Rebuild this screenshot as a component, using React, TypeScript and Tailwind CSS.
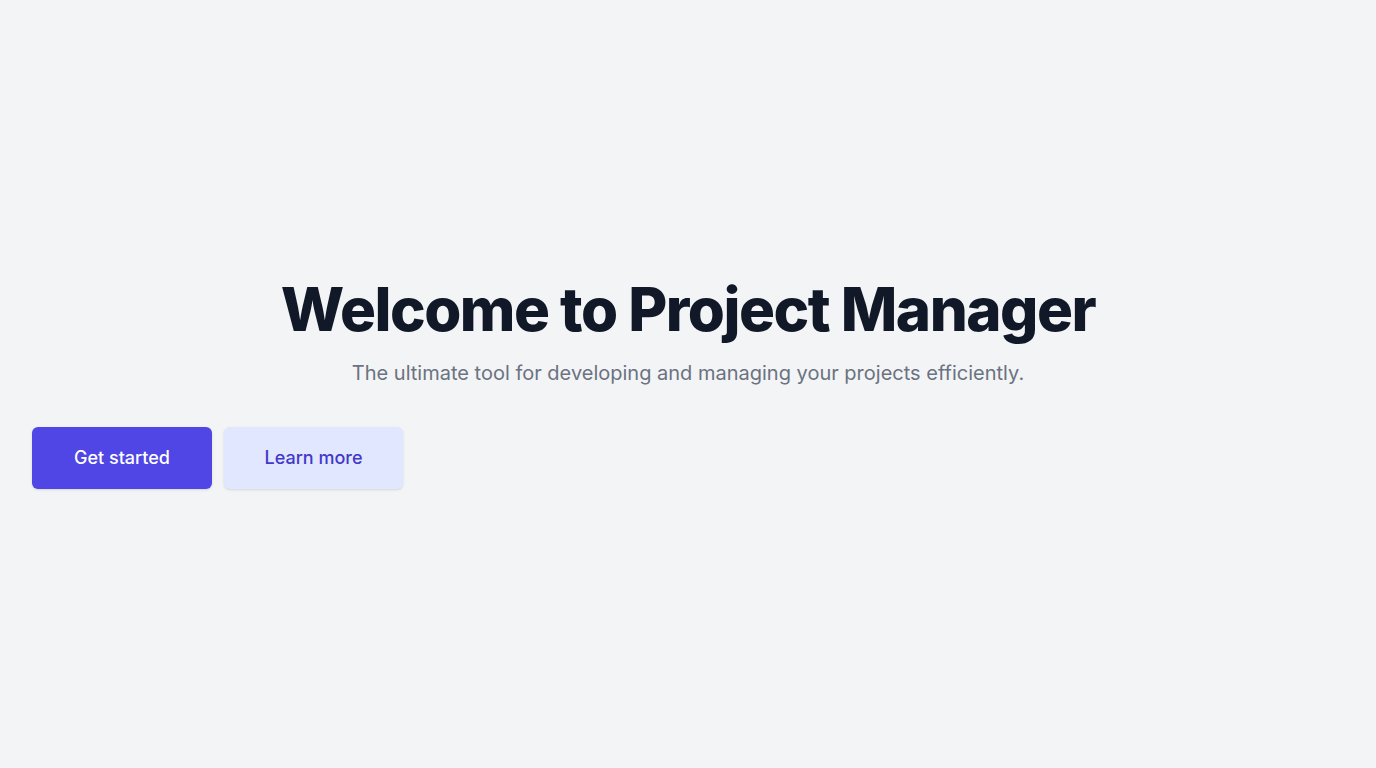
import React from 'react';

const App: React.FC = () => {
  return (
    <div
      className="min-h-screen bg-[#f3f4f6] flex flex-col justify-center px-8"
      style={{ fontFamily: 'Inter, "Noto Sans", sans-serif' }}
    >
      <div className="text-center">
        <h1 className="text-6xl font-extrabold tracking-tight text-[#111827]">
          Welcome to Project Manager
        </h1>
        <p className="mt-5 text-xl text-[#6b7280]">
          The ultimate tool for developing and managing your projects efficiently.
        </p>
      </div>

      {/* Actions */}
      <div className="mt-10 flex gap-3">
        <button className="w-[180px] py-[17px] rounded-md bg-[#4f46e5] text-white text-lg font-medium shadow-sm">
          Get started
        </button>
        <button className="w-[179px] py-[17px] rounded-md bg-[#e0e7ff] text-[#4338ca] text-lg font-medium shadow-sm">
          Learn more
        </button>
      </div>
    </div>
  );
};

export default App;
